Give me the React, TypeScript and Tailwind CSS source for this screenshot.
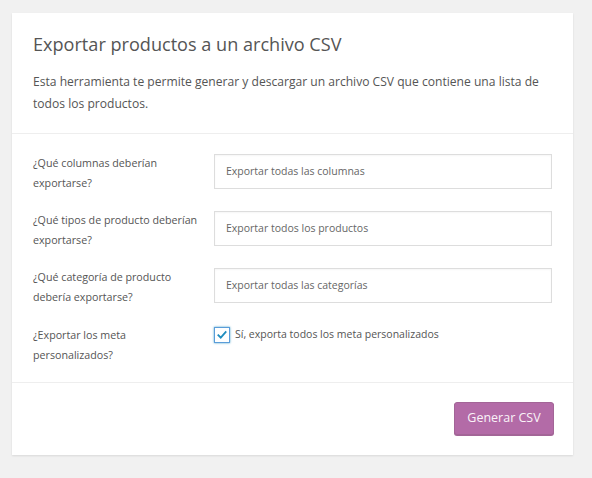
const rows = [
  { label: ["¿Qué columnas deberían", "exportarse?"], placeholder: "Exportar todas las columnas" },
  { label: ["¿Qué tipos de producto deberían", "exportarse?"], placeholder: "Exportar todos los productos" },
  { label: ["¿Qué categoría de producto", "debería exportarse?"], placeholder: "Exportar todas las categorías" },
];

const CheckIcon = () => (
  <svg viewBox="0 0 16 16" className="h-[14px] w-[14px]">
    <path d="M3.8 8.2 L6.6 11 L12.2 4.6" fill="none" stroke="#1e8cbe" strokeWidth="2" strokeLinecap="square" />
  </svg>
);

export default function App() {
  return (
    <div className="min-h-[478px] w-[592px] bg-[#f1f1f1] pl-[12px] pt-[13px] font-['Open_Sans',sans-serif] text-[#555]">
      <div className="w-[561px] bg-white shadow-[0_1px_2px_rgba(0,0,0,0.1)]">
        {/* Header */}
        <div className="border-b border-[#eee] px-[21px] pb-[18px] pt-[18px]">
          <h2 className="text-[18.1px] leading-[26px] text-[#555]">Exportar productos a un archivo CSV</h2>
          <p className="mt-[14px] text-[12.1px] leading-[22px] text-[#555]">
            Esta herramienta te permite generar y descargar un archivo CSV que contiene una lista de todos los productos.
          </p>
        </div>

        {/* Form */}
        <div className="flex flex-col gap-[17px] border-b border-[#eee] px-[21px] pb-[17px] pt-[20px]">
          {rows.map((row) => (
            <div key={row.placeholder} className="flex items-start">
              <label className="-mt-[1px] mb-[1px] w-[181px] text-[10.7px] leading-[20px] text-[#555]">
                {row.label[0]}
                <br />
                {row.label[1]}
              </label>
              <div className="flex h-[35px] w-[338px] items-center border border-[#ddd] px-[11px] text-[10.5px] text-[#666] shadow-[inset_0_1px_2px_rgba(0,0,0,0.04)]">
                {row.placeholder}
              </div>
            </div>
          ))}
          <div className="flex items-start">
            <label className="w-[181px] text-[10.7px] leading-[20px] text-[#555]">
              ¿Exportar los meta
              <br />
              personalizados?
            </label>
            <div className="flex h-[20px] items-center gap-[5px]">
              <div className="flex h-[16px] w-[16px] items-center justify-center border border-[#5b9dd9] bg-white shadow-[0_0_2px_rgba(30,140,190,0.8)]">
                <CheckIcon />
              </div>
              <span className="text-[10.5px] text-[#555]">Sí, exporta todos los meta personalizados</span>
            </div>
          </div>
        </div>

        {/* Footer */}
        <div className="flex justify-end pb-[20px] pr-[19px] pt-[19px]">
          <button className="h-[33px] w-[100px] rounded-[3px] border border-[#a36597] bg-[#b36ba7] text-[12.5px] text-[#faf3f8] shadow-[0_1px_0_#a36597]">
            Generar CSV
          </button>
        </div>
      </div>
    </div>
  );
}
